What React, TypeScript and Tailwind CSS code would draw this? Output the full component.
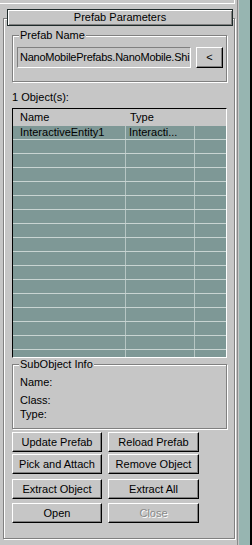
import React from "react";

const font = { fontFamily: '"Liberation Sans", Arial, sans-serif' };

function Btn({ label, disabled }: { label: string; disabled?: boolean }) {
  return (
    <div className="h-[20px] flex items-center justify-center border border-t-white border-l-white border-r-black border-b-black shadow-[inset_-1px_-1px_0_#808080] bg-[#c6c6c6]">
      <span
        className={
          disabled
            ? "text-[#8a8a8a] [text-shadow:1px_1px_0_#ffffff] text-[11px] leading-none"
            : "text-black text-[11px] leading-none"
        }
      >
        {label}
      </span>
    </div>
  );
}

function Group({
  label,
  className,
  children,
}: {
  label: string;
  className: string;
  children?: React.ReactNode;
}) {
  return (
    <div
      className={
        "relative border border-[#808080] shadow-[1px_1px_0_#ffffff,inset_1px_1px_0_#ffffff] " +
        className
      }
    >
      <span className="absolute left-[6px] -top-[7px] px-[1px] bg-[#c6c6c6] text-[11px] leading-[13px] text-black">
        {label}
      </span>
      {children}
    </div>
  );
}

export default function App() {
  const rows = Array.from({ length: 17 });
  return (
    <div
      className="w-[252px] h-[545px] bg-[#c6c6c6] flex overflow-hidden text-black"
      style={font}
    >
      <div className="w-[237px] h-[545px] flex flex-col">
        <div className="h-[4px] w-[235px] border-b border-r border-white" />
        <div className="relative z-10 ml-[7px] mt-[5px] w-[226px] h-[17px] border border-[#1e2a2a] shadow-[inset_1px_1px_0_#ffffff,inset_-1px_-1px_0_#808080] bg-[#c6c6c6] flex items-center justify-center">
          <span className="text-[11px] leading-none">Prefab Parameters</span>
        </div>
        <div className="-mt-[8px] ml-[3px] w-[232px] h-[521px] border border-[#808080] shadow-[1px_1px_0_#ffffff,inset_1px_1px_0_#ffffff] pl-[8px] flex flex-col">
          <Group label="Prefab Name" className="mt-[16px] w-[215px] h-[47px]">
            <div className="flex items-center mt-[11px] ml-[4px]">
              <div className="w-[174px] h-[21px] border border-t-[#808080] border-l-[#808080] border-r-white border-b-white overflow-hidden whitespace-nowrap flex items-center pl-[2px]">
                <span className="text-[11px] leading-none tracking-[-0.25px]">
                  NanoMobilePrefabs.NanoMobile.Shi
                </span>
              </div>
              <div className="ml-[5px] w-[27px] h-[21px] border border-t-white border-l-white border-r-black border-b-black shadow-[inset_-1px_-1px_0_#808080] flex items-center justify-center">
                <span className="text-[11px] leading-none">&lt;</span>
              </div>
            </div>
          </Group>
          <div className="mt-[9px] h-[13px] text-[11px] leading-[13px]">
            1 Object(s):
          </div>
          <div className="mt-[4px] w-[215px] h-[250px] border border-t-black border-l-black border-r-white border-b-white shadow-[inset_1px_1px_0_#808080] overflow-hidden flex flex-col">
            <div className="h-[17px] shrink-0 flex items-center text-[11px] leading-none bg-[#c6c6c6]">
              <span className="ml-[7px] w-[110px]">Name</span>
              <span>Type</span>
            </div>
            {rows.map((_, i) => (
              <div
                key={i}
                className="h-[14px] shrink-0 flex bg-[#7e9896] border-b border-[#c8d4d2] text-[11px] leading-[13px]"
              >
                <div className="w-[113px] border-r border-[#b6c6c4] pl-[7px] whitespace-nowrap overflow-hidden">
                  {i === 0 ? "InteractiveEntity1" : ""}
                </div>
                <div className="w-[69px] border-r border-[#b6c6c4] pl-[3px] whitespace-nowrap overflow-hidden">
                  {i === 0 ? "Interacti..." : ""}
                </div>
                <div className="flex-1" />
              </div>
            ))}
          </div>
          <Group label="SubObject Info" className="mt-[6px] w-[215px] h-[65px]">
            <div className="ml-[7px] mt-[11px] flex flex-col text-[11px] leading-[13px]">
              <span>Name:</span>
              <span className="mt-[5px]">Class:</span>
              <span className="mt-[1px]">Type:</span>
            </div>
          </Group>
          <div className="mt-[3px] grid grid-cols-[90px_91px] gap-x-[6px] w-[187px]">
            <Btn label="Update Prefab" />
            <Btn label="Reload Prefab" />
          </div>
          <div className="mt-[2px] grid grid-cols-[90px_91px] gap-x-[6px] w-[187px]">
            <Btn label="Pick and Attach" />
            <Btn label="Remove Object" />
          </div>
          <div className="mt-[5px] grid grid-cols-[90px_91px] gap-x-[6px] w-[187px]">
            <Btn label="Extract Object" />
            <Btn label="Extract All" />
          </div>
          <div className="mt-[4px] grid grid-cols-[90px_91px] gap-x-[6px] w-[187px]">
            <Btn label="Open" />
            <Btn label="Close" disabled />
          </div>
        </div>
      </div>
      <div className="w-[1px] h-full bg-[#8a8a8a]" />
      <div className="w-[1px] h-full bg-[#c6c6c6]" />
      <div className="w-[11px] h-full bg-[#97b5b1]" />
      <div className="w-[2px] h-full bg-black" />
    </div>
  );
}
